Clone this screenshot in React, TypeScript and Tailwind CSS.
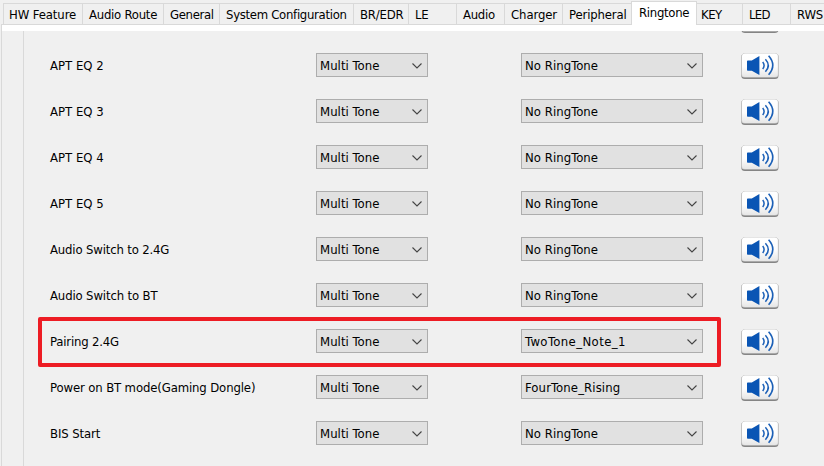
const tabs = [
  { label: "HW Feature", box: "w-[79px] pl-[5px]", ls: "tracking-[-0.1px]" },
  { label: "Audio Route", box: "w-[81px] pl-[6px]", ls: "tracking-[-0.25px]" },
  { label: "General", box: "w-[56px] pl-[6px]", ls: "tracking-[-0.35px]" },
  { label: "System Configuration", box: "w-[134px] pl-[6px]", ls: "tracking-[-0.3px]" },
  { label: "BR/EDR", box: "w-[55px] pl-[6px]", ls: "tracking-[-0.2px]" },
  { label: "LE", box: "w-[48px] pl-[6px]", ls: "tracking-[-0.3px]" },
  { label: "Audio", box: "w-[48px] pl-[6px]", ls: "tracking-[-0.3px]" },
  { label: "Charger", box: "w-[58px] pl-[6px]", ls: "tracking-[-0.1px]" },
  { label: "Peripheral", box: "w-[69px] pl-[6px]", ls: "tracking-[-0.15px]" },
  { label: "Ringtone", box: "w-[66px] pl-[7px]", ls: "tracking-[-0.3px]", active: true },
  { label: "KEY", box: "w-[45px] pl-[4px]", ls: "tracking-[-0.5px]" },
  { label: "LED", box: "w-[48px] pl-[6px]", ls: "tracking-[-0.7px]" },
  { label: "RWS", box: "w-[60px] pl-[6px]", ls: "tracking-[-0.2px]" },
];

const rows = [
  { name: "APT EQ 1", ls: "tracking-normal", tone: "No RingTone", tls: "tracking-[0.05px]" },
  { name: "APT EQ 2", ls: "tracking-normal", tone: "No RingTone", tls: "tracking-[0.05px]" },
  { name: "APT EQ 3", ls: "tracking-normal", tone: "No RingTone", tls: "tracking-[0.05px]" },
  { name: "APT EQ 4", ls: "tracking-normal", tone: "No RingTone", tls: "tracking-[0.05px]" },
  { name: "APT EQ 5", ls: "tracking-normal", tone: "No RingTone", tls: "tracking-[0.05px]" },
  { name: "Audio Switch to 2.4G", ls: "tracking-[-0.16px]", tone: "No RingTone", tls: "tracking-[0.05px]" },
  { name: "Audio Switch to BT", ls: "tracking-[-0.14px]", tone: "No RingTone", tls: "tracking-[0.05px]" },
  { name: "Pairing 2.4G", ls: "tracking-[-0.2px]", tone: "TwoTone_Note_1", tls: "tracking-[0.4px]", marked: true },
  { name: "Power on BT mode(Gaming Dongle)", ls: "tracking-[-0.13px]", tone: "FourTone_Rising", tls: "tracking-[0.1px]" },
  { name: "BIS Start", ls: "tracking-[-0.1px]", tone: "No RingTone", tls: "tracking-[0.05px]" },
];

function Combo({ value, width, ls }: { value: string; width: string; ls: string }) {
  return (
    <div className={`flex h-6 shrink-0 items-center justify-between border border-[#adadad] bg-[#e1e1e1] pr-[5px] pl-[3px] ${width}`}>
      <span className={`pt-px ${ls}`}>{value}</span>
      <svg className="mt-px" width="10" height="6" viewBox="0 0 10 6" fill="none" stroke="#444" strokeWidth="1.1">
        <path d="M0.5 0.5 5 5 9.5 0.5" />
      </svg>
    </div>
  );
}

function PlayButton() {
  return (
    <button className="ml-[38px] block h-[26px] w-[38px] shrink-0" aria-label="Play">
      <svg width="38" height="26" viewBox="0 0 38 26" fill="none">
        <defs>
          <linearGradient id="face" x1="0" y1="0" x2="0" y2="1">
            <stop offset="0" stopColor="#fff" />
            <stop offset="0.55" stopColor="#fdfdfd" />
            <stop offset="1" stopColor="#e6e6e6" />
          </linearGradient>
        </defs>
        <rect x="0.3" y="0.5" width="37.2" height="25.5" rx="3.5" fill="#858585" />
        <rect x="0.3" y="0.3" width="37.2" height="24.3" rx="3.5" fill="#cfcfcf" />
        <rect x="1" y="0.6" width="35.8" height="23.4" rx="3" fill="url(#face)" />
        <path d="M6 8.2Q6 7.4 6.8 7.4H10.8L18.4 2.9V22.1L10.8 17.7H6.8Q6 17.7 6 16.9Z" fill="#0a55b4" />
        <path d="M21.7 9Q24.5 12.4 21.7 16" stroke="#1c60b7" strokeWidth="1.5" />
        <path d="M24.4 6.2Q30.2 12.4 24.4 18.8" stroke="#1c60b7" strokeWidth="1.5" />
        <path d="M27.6 2.8Q36 12.3 27.6 21.8" stroke="#1c60b7" strokeWidth="1.6" />
      </svg>
    </button>
  );
}

export default function App() {
  return (
    <div className="flex h-[466px] w-[824px] flex-col overflow-hidden bg-[#f0f0f0] font-['DejaVu_Sans_Condensed','DejaVu_Sans',sans-serif] text-[13px] leading-[16px] font-normal whitespace-nowrap text-black [font-stretch:condensed]">
      <div className="flex h-6 shrink-0 items-end pl-[3px]">
        {tabs.map((t, i) => (
          <div
            key={t.label}
            className={`shrink-0 border-[#d9d9d9] ${t.box} ${t.ls} ${
              t.active
                ? "z-10 -mb-px h-6 border-x border-t bg-white pt-[3px]"
                : `h-[21px] border-t pt-[3px] ${i === 10 ? "" : "border-l"}`
            }`}
          >
            {t.label}
          </div>
        ))}
      </div>
      <div className="ml-px flex min-h-0 flex-1 flex-col border-t border-l border-[#d9d9d9]">
        <div className="h-[6px] shrink-0 bg-white" />
        <div className="ml-[21px] min-h-0 flex-1 overflow-hidden border-l border-[#d9d9d9]">
          <div className="-mt-6">
            {rows.map((r) => (
              <div key={r.name} className="relative flex h-[46px] items-start pl-[26px]">
                <div className={`flex h-[25px] w-[266px] shrink-0 items-center ${r.ls}`}>{r.name}</div>
                <Combo value="Multi Tone" width="w-[112px]" ls="tracking-[0.05px]" />
                <div className="w-[93px] shrink-0" />
                <Combo value={r.tone} width="w-[182px]" ls={r.tls} />
                <PlayButton />
                {r.marked && (
                  <div className="absolute -top-[12px] left-[14px] h-[50px] w-[683px] rounded-[2px] border-4 border-[#ed1c24]" />
                )}
              </div>
            ))}
          </div>
        </div>
      </div>
    </div>
  );
}
